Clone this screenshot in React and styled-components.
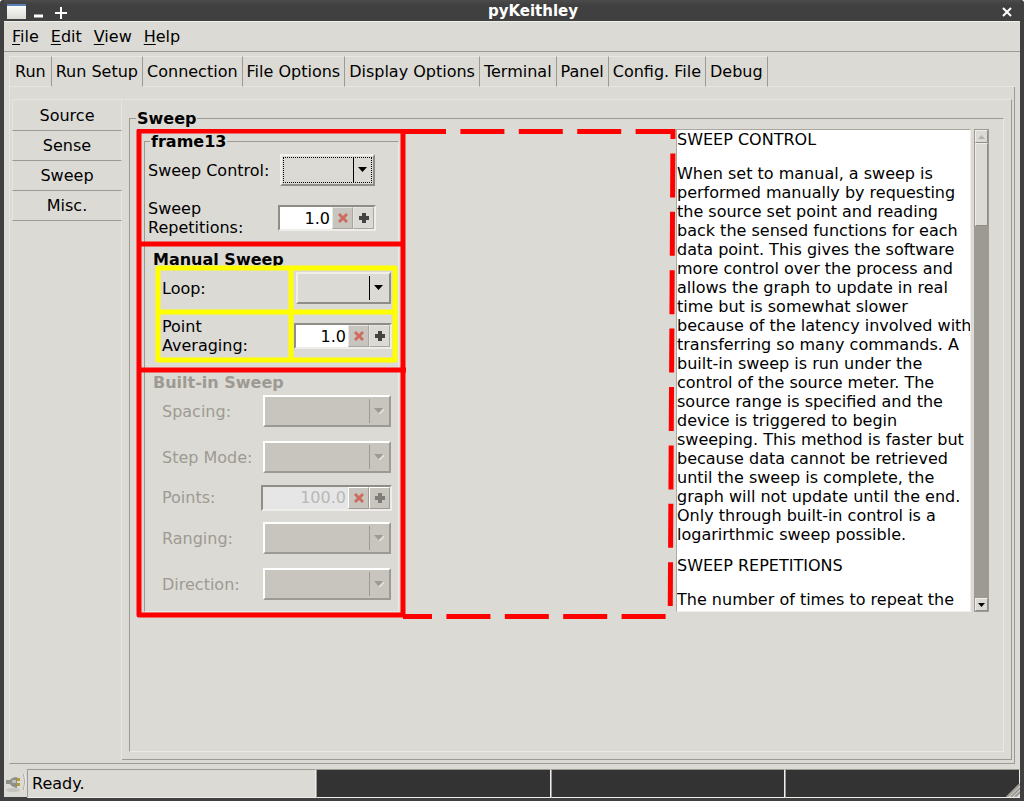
import React, { useState } from 'react';
import styled, { createGlobalStyle, css } from 'styled-components';

const menus = ['File', 'Edit', 'View', 'Help'];
const tabs = [
  'Run',
  'Run Setup',
  'Connection',
  'File Options',
  'Display Options',
  'Terminal',
  'Panel',
  'Config. File',
  'Debug',
];
const sideTabs = ['Source', 'Sense', 'Sweep', 'Misc.'];

const sweepHelp = `When set to manual, a sweep is
performed manually by requesting
the source set point and reading
back the sensed functions for each
data point. This gives the software
more control over the process and
allows the graph to update in real
time but is somewhat slower
because of the latency involved with
transferring so many commands. A
built-in sweep is run under the
control of the source meter. The
source range is specified and the
device is triggered to begin
sweeping. This method is faster but
because data cannot be retrieved
until the sweep is complete, the
graph will not update until the end.
Only through built-in control is a
logarirthmic sweep possible.`;

function Combo({ id, wide, focused, disabled }) {
  return (
    <ComboBox $wide={wide}>
      <Select id={id} $focused={focused} disabled={disabled} />
      <ComboArrow $disabled={disabled}>
        <svg width="10" height="6">
          {disabled && <path d="M5 6 L10 1 L10 2 L6 6 Z" fill="#fff" />}
          <path d="M0 0 H9 L4.5 5 Z" fill={disabled ? '#9c9a93' : '#000'} />
        </svg>
      </ComboArrow>
    </ComboBox>
  );
}

function Spin({ id, initial, step = 1, wide, disabled }) {
  const [value, setValue] = useState(initial);

  return (
    <SpinBox $wide={wide} $disabled={disabled}>
      <SpinInput
        id={id}
        value={value}
        disabled={disabled}
        onChange={(e) => setValue(e.target.value)}
      />
      <SpinButton
        aria-label="Reset"
        $flat
        disabled={disabled}
        onClick={() => setValue(initial)}
      >
        <svg width="12" height="12">
          <path
            d="M3 1 L6 4 L9 1 L11 3 L8 6 L11 9 L9 11 L6 8 L3 11 L1 9 L4 6 L1 3 Z"
            fill="#cf6a5e"
          />
        </svg>
      </SpinButton>
      <SpinButton
        aria-label="Increase"
        disabled={disabled}
        onClick={() => setValue((Number(value) + step).toFixed(1))}
      >
        <svg width="12" height="12">
          <path
            d="M4 1 H8 V4 H11 V8 H8 V11 H4 V8 H1 V4 H4 Z"
            fill={disabled ? '#7d7c78' : '#444442'}
          />
        </svg>
      </SpinButton>
    </SpinBox>
  );
}

function HelpText() {
  return (
    <Help>
      <HelpPane tabIndex={0}>
        <HelpTitle>SWEEP CONTROL</HelpTitle>
        <HelpBody>{sweepHelp}</HelpBody>
        <HelpTitle>SWEEP REPETITIONS</HelpTitle>
        <HelpBody>The number of times to repeat the</HelpBody>
      </HelpPane>
      <ScrollBar>
        <ScrollButton aria-label="Scroll up" disabled>
          <svg width="7" height="4">
            <path d="M0 4 H7 L3.5 0 Z" fill="#b5b3ac" />
          </svg>
        </ScrollButton>
        <Thumb />
        <ScrollButton aria-label="Scroll down">
          <svg width="7" height="4">
            <path d="M0 0 H7 L3.5 4 Z" fill="#000" />
          </svg>
        </ScrollButton>
      </ScrollBar>
    </Help>
  );
}

function SweepFrame() {
  return (
    <FrameColumn>
      <GroupBox>
        <Legend $left={5}>frame13</Legend>
        <Rows>
          <Row $outer $height={46}>
            <label htmlFor="control">Sweep Control:</label>
            <Combo id="control" focused />
          </Row>
          <Row $outer $height={50}>
            <label htmlFor="repetitions">Sweep Repetitions:</label>
            <Spin id="repetitions" initial="1.0" />
          </Row>
        </Rows>
        <SectionTitle $gap={7}>Manual Sweep</SectionTitle>
        <Rows>
          <Row $height={46}>
            <label htmlFor="loop">Loop:</label>
            <Combo id="loop" />
          </Row>
          <Row $height={50}>
            <label htmlFor="averaging">Point Averaging:</label>
            <Spin id="averaging" initial="1.0" />
          </Row>
        </Rows>
        <SectionTitle $gap={12} $disabled>
          Built-in Sweep
        </SectionTitle>
        <Rows>
          <Row $wide $disabled $height={46}>
            <label htmlFor="spacing">Spacing:</label>
            <Combo id="spacing" wide disabled />
          </Row>
          <Row $wide $disabled $height={46}>
            <label htmlFor="step">Step Mode:</label>
            <Combo id="step" wide disabled />
          </Row>
          <Row $wide $disabled $height={35}>
            <label htmlFor="points">Points:</label>
            <Spin id="points" initial="100.0" wide disabled />
          </Row>
          <Row $wide $disabled $height={46}>
            <label htmlFor="ranging">Ranging:</label>
            <Combo id="ranging" wide disabled />
          </Row>
          <Row $wide $disabled $height={46}>
            <label htmlFor="direction">Direction:</label>
            <Combo id="direction" wide disabled />
          </Row>
        </Rows>
      </GroupBox>
      {/* grid outlines over the packed frames */}
      <FrameOutline width="272" height="492" fill="none" strokeWidth="5">
        <g stroke="#ff0" strokeLinejoin="round">
          <path d="M22 139 H259 V231 H22 Z" />
          <path d="M155 139 V231 M22 183 H259" />
        </g>
        <g stroke="#f00" strokeLinejoin="round">
          <path d="M3 2 H267 V486 H3 Z" />
          <path d="M3 115 H267 M3 241 H270" />
        </g>
      </FrameOutline>
    </FrameColumn>
  );
}

function App() {
  const [tab, setTab] = useState('Run Setup');
  const [side, setSide] = useState('Sweep');

  return (
    <Window>
      <GlobalStyle />
      <TitleBar>
        <svg width="64" height="18">
          <defs>
            <linearGradient id="win" x1="0" y1="0" x2="0" y2="1">
              <stop offset="0" stopColor="#fff" />
              <stop offset="1" stopColor="#dcdcd6" />
            </linearGradient>
          </defs>
          <rect x="3" y="1" width="19" height="15" fill="url(#win)" />
          <rect x="3" y="1" width="19" height="2" fill="#5b80b8" />
          <path d="M30 13 H39" stroke="#fff" strokeWidth="3" />
          <path d="M51 10 H63 M57 4 V16" stroke="#fff" strokeWidth="2" />
        </svg>
        <WindowTitle>pyKeithley</WindowTitle>
        <CloseButton aria-label="Close">
          <svg width="10" height="10">
            <path d="M1 1 L9 9 M9 1 L1 9" stroke="#fff" strokeWidth="2" />
          </svg>
        </CloseButton>
      </TitleBar>
      <MenuBar>
        {menus.map((menu) => (
          <MenuButton key={menu}>
            <u>{menu[0]}</u>
            {menu.slice(1)}
          </MenuButton>
        ))}
      </MenuBar>
      <Notebook>
        <TabBar role="tablist">
          {tabs.map((name) => (
            <Tab
              key={name}
              role="tab"
              aria-selected={name === tab}
              $active={name === tab}
              onClick={() => setTab(name)}
            >
              {name}
            </Tab>
          ))}
          <TabFill />
        </TabBar>
        <Page>
          <SideBar role="tablist">
            {sideTabs.map((name) => (
              <SideTab
                key={name}
                role="tab"
                aria-selected={name === side}
                $active={name === side}
                onClick={() => setSide(name)}
              >
                {name}
              </SideTab>
            ))}
            <SideFill />
          </SideBar>
          <SidePage>
            <SweepGroup>
              <Legend $left={6}>Sweep</Legend>
              <Columns>
                <SweepFrame />
                <EmptyColumn>
                  <EmptyOutline>
                    <g stroke="#f00" strokeWidth="5" strokeDasharray="44 14.400">
                      <line x1="5" y1="2.500" x2="100%" y2="2.500" strokeDashoffset="2" />
                      <line x1="100%" y1="0" x2="99%" y2="477" strokeDashoffset="34" />
                      <line x1="4" y1="487.500" x2="98%" y2="487.500" strokeDashoffset="15" />
                    </g>
                  </EmptyOutline>
                </EmptyColumn>
                <HelpText />
              </Columns>
            </SweepGroup>
          </SidePage>
        </Page>
      </Notebook>
      <StatusBar>
        <svg width="23" height="28">
          <ellipse cx="9" cy="21" rx="7" ry="2" fill="#c6c4be" />
          <path d="M2 11 H6 Q8 8 13 8 V19 Q8 18 6 15 H2 Z" fill="#8f8f8a" />
          <path d="M8 11 H12 V14 H8 Z" fill="#bdbdb9" />
          <path d="M13 10.500 H16 M13 15.500 H16" stroke="#b59b2c" strokeWidth="3" />
          <path d="M19.500 5 Q22 12 19.500 21" stroke="#a9a7a0" fill="none" />
          <path d="M20.500 5 Q23 12 20.500 21" stroke="#edebe7" fill="none" />
        </svg>
        <StatusText>Ready.</StatusText>
        <StatusCell />
        <StatusCell />
        <StatusCell />
        <Grip width="14" height="14">
          <path d="M14 0 V14 H0 Z" fill="#dcdad5" />
          <path
            d="M1 14 L14 1 M5 14 L14 5 M9 14 L14 9"
            stroke="#9c9a93"
            strokeWidth="2"
          />
        </Grip>
      </StatusBar>
    </Window>
  );
}

export default App;

const bg = '#dcdad5';
const light = '#e8e6e3';
const dark = '#9c9a93';
const insensitive = '#c8c5be';

const GlobalStyle = createGlobalStyle`
  * {
    box-sizing: border-box;
  }
  body {
    margin: 0;
    background: #fff;
  }
  body, button, input, select {
    font-family: 'DejaVu Sans', sans-serif;
    font-size: 16px;
    line-height: 19px;
    color: #000;
  }
  button {
    margin: 0;
    padding: 0;
    border: 0;
    background: none;
  }
  svg {
    display: block;
    flex: none;
  }
`;

const Window = styled.div`
  display: flex;
  flex-direction: column;
  min-height: 100vh;
  background: ${bg};
  border: 4px solid #404040;
  border-top: 0;
  border-radius: 3px 3px 0 0;
`;

const TitleBar = styled.header`
  display: flex;
  align-items: center;
  height: 21px;
  padding: 2px 8px 0 0;
  background: linear-gradient(#4c4c4c, #404040 5px);
`;
const WindowTitle = styled.div`
  flex: 1;
  padding-right: 4px;
  text-align: center;
  font-size: 15px;
  font-weight: bold;
  color: #fff;
`;
const CloseButton = styled.button`
  height: 10px;
`;

const MenuBar = styled.nav`
  display: flex;
  align-items: center;
  gap: 12px;
  height: 31px;
  padding: 0 8px;
  border-top: 1px solid #f0eeeb;
  border-bottom: 1px solid ${dark};
`;
const MenuButton = styled.button`
  u {
    text-underline-offset: 2px;
  }
`;

const Notebook = styled.main`
  display: flex;
  flex-direction: column;
  flex: 1;
  padding: 4px 5px 0;
`;
const TabBar = styled.div`
  display: flex;
  height: 31px;
`;
const Tab = styled.button`
  padding: 0 4px;
  white-space: nowrap;
  border-top: 1px solid ${light};
  border-right: 1px solid ${dark};
  border-bottom: 1px solid ${(p) => (p.$active ? bg : light)};
  &:first-child {
    padding: 0 5px;
    border-left: 1px solid ${light};
  }
`;
const TabFill = styled.div`
  flex: 1;
  border-bottom: 1px solid ${light};
`;
const Page = styled.div`
  display: grid;
  grid-template-columns: 110px 1fr;
  flex: 1;
  padding: 12px 2px 3px;
  border: 1px solid ${dark};
  border-left-color: ${light};
  border-top: 0;
`;

const SideBar = styled.div`
  display: flex;
  flex-direction: column;
`;
const SideTab = styled.button`
  height: 30px;
  border-left: 1px solid ${light};
  border-right: 1px solid ${(p) => (p.$active ? bg : light)};
  border-bottom: 1px solid ${dark};
  &:first-child {
    height: 32px;
    border-top: 1px solid ${light};
  }
`;
const SideFill = styled.div`
  flex: 1;
  border-right: 1px solid ${light};
`;
const SidePage = styled.div`
  display: flex;
  padding: 9px 7px 7px;
  border: 1px solid ${dark};
  border-top-color: ${light};
  border-left: 0;
`;

const GroupBox = styled.fieldset`
  min-width: 0;
  margin: 0;
  padding: 0 0 4px;
  border: 1px solid ${dark};
  border-right-color: #ebe9e6;
  border-bottom-color: #ebe9e6;
`;
const SweepGroup = styled(GroupBox)`
  flex: 1;
`;
const Legend = styled.legend`
  margin-left: ${(p) => p.$left}px;
  padding: 0 1px;
  font-weight: bold;
`;
const Columns = styled.div`
  display: grid;
  grid-template-columns: 255px 1fr 313px;
  align-items: start;
  padding: 1px 14px 0;
`;

const FrameColumn = styled.div`
  position: relative;
  padding-top: 3px;
`;
const FrameOutline = styled.svg`
  position: absolute;
  left: -8px;
  top: 0;
  pointer-events: none;
`;
const SectionTitle = styled.div`
  padding: ${(p) => p.$gap}px 0 0 8px;
  font-weight: bold;
  color: ${(p) => (p.$disabled ? dark : '#000')};
`;
const Rows = styled.div`
  margin-top: -4px;
`;
const Row = styled.div`
  display: grid;
  grid-template-columns: 1fr ${(p) => (p.$wide ? '131px' : '98px')};
  gap: 8px;
  align-items: center;
  height: ${(p) => p.$height}px;
  padding: ${(p) => (p.$outer ? '0 22px 0 3px' : '0 6px 0 17px')};
  color: ${(p) => (p.$disabled ? dark : '#000')};
`;

const ComboBox = styled.span`
  position: relative;
  justify-self: center;
  width: ${(p) => (p.$wide ? '128px' : '95px')};
  height: 32px;
`;
const Select = styled.select`
  appearance: none;
  display: block;
  width: 100%;
  height: 100%;
  background: ${bg};
  border: 2px solid;
  border-color: #f0eeeb #8f8d86 #8f8d86 #f0eeeb;
  border-radius: 0;
  &:disabled {
    background: ${insensitive};
    border-color: #fff ${dark} ${dark} #fff;
    opacity: 1;
  }
  ${(p) =>
    p.$focused &&
    css`
      outline: 1px dotted #000;
      outline-offset: -4px;
    `}
`;
const ComboArrow = styled.span`
  position: absolute;
  top: 4px;
  right: 4px;
  bottom: 4px;
  display: flex;
  align-items: center;
  padding-left: 4px;
  border-left: 1px solid ${(p) => (p.$disabled ? dark : '#000')};
  width: 18px;
  pointer-events: none;
`;

const SpinBox = styled.span`
  display: flex;
  width: ${(p) => (p.$wide ? '131px' : '98px')};
  height: 26px;
  border: 2px solid;
  border-color: #8f8d86 #efedea #efedea #8f8d86;
  background: ${(p) => (p.$disabled ? '#e6e6e6' : '#fff')};
`;
const SpinInput = styled.input`
  flex: 1;
  min-width: 0;
  padding: 0 2px 0 0;
  border: 0;
  background: none;
  text-align: right;
  &:disabled {
    color: #b8b8b6;
  }
`;
const SpinButton = styled.button`
  display: flex;
  align-items: center;
  justify-content: center;
  width: 21px;
  background: ${(p) => (p.$flat ? insensitive : bg)};
  border: 1px solid;
  border-color: ${light} #a9a7a0 #a9a7a0 ${light};
  &:disabled {
    background: ${insensitive};
    border-color: #fff ${dark} ${dark} #fff;
  }
`;

const EmptyColumn = styled.div`
  position: relative;
  height: 483px;
`;
const EmptyOutline = styled.svg`
  position: absolute;
  top: 0;
  left: 0;
  width: calc(100% - 3px);
  height: 100%;
  overflow: visible;
`;

const Help = styled.div`
  display: grid;
  grid-template-columns: 1fr 15px;
  gap: 3px;
  height: 483px;
`;
const HelpPane = styled.div`
  overflow: hidden;
  background: #fff;
  border: 1px solid #aaa8a1;
  border-right-color: #f0eeeb;
  border-bottom-color: #f0eeeb;
`;
const HelpTitle = styled.h2`
  margin: 0;
  font-size: 16px;
  font-weight: normal;
`;
const HelpBody = styled.p`
  margin: 15px 0 12px;
  white-space: pre;
`;
const ScrollBar = styled.div`
  display: flex;
  flex-direction: column;
  justify-content: space-between;
  padding: 1px;
  background: ${dark};
`;
const ScrollButton = styled.button`
  display: flex;
  align-items: center;
  justify-content: center;
  height: 13px;
  background: ${bg};
  border: 1px solid;
  border-color: #f0eeeb #8f8d86 #8f8d86 #f0eeeb;
`;
const Thumb = styled.div`
  height: 83px;
  margin-bottom: auto;
  background: ${bg};
  border: 1px solid;
  border-color: #f0eeeb #8f8d86 #8f8d86 #f0eeeb;
`;

const StatusBar = styled.footer`
  position: relative;
  display: grid;
  grid-template-columns: 23px 289px 1fr 1fr 1fr;
  height: 33px;
  padding-top: 5px;
`;
const StatusText = styled.div`
  padding: 4px;
  border: 1px solid ${dark};
  border-right-color: #f0eeeb;
  border-bottom-color: #f0eeeb;
`;
const StatusCell = styled.div`
  background: #333;
  border: 1px solid ${dark};
  border-right-color: #f0eeeb;
  border-bottom-color: #f0eeeb;
`;
const Grip = styled.svg`
  position: absolute;
  right: 0;
  bottom: 0;
`;
